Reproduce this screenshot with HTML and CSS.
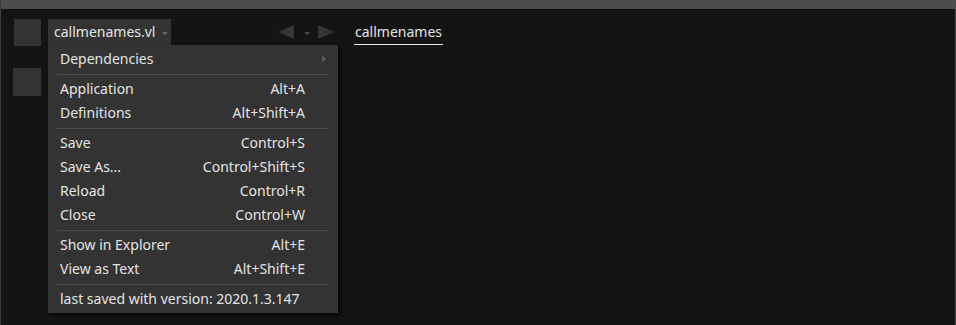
FILE: index.html
```html
<!DOCTYPE html>
<html>
<head>
<meta charset="utf-8">
<link rel="stylesheet" href="styles.css">
</head>
<body>
<div class="window">
  <div class="titlebar"></div>
  <div class="content">
    <div class="side">
      <div class="sq sq1"></div>
      <div class="sq sq2"></div>
    </div>
    <div class="main">
      <div class="tabrow">
        <div class="doc-tab">
          <span class="doc-name">callmenames.vl</span>
          <span class="tri-down"></span>
          <div class="menu">
            <div class="item"><span>Dependencies</span><span class="sub-arrow"></span></div>
            <div class="sep"></div>
            <div class="item"><span>Application</span><span class="key">Alt+A</span></div>
            <div class="item"><span>Definitions</span><span class="key">Alt+Shift+A</span></div>
            <div class="sep"></div>
            <div class="item"><span>Save</span><span class="key">Control+S</span></div>
            <div class="item"><span>Save As...</span><span class="key">Control+Shift+S</span></div>
            <div class="item"><span>Reload</span><span class="key">Control+R</span></div>
            <div class="item"><span>Close</span><span class="key">Control+W</span></div>
            <div class="sep"></div>
            <div class="item"><span>Show in Explorer</span><span class="key">Alt+E</span></div>
            <div class="item"><span>View as Text</span><span class="key">Alt+Shift+E</span></div>
            <div class="sep"></div>
            <div class="item"><span>last saved with version: 2020.1.3.147</span></div>
          </div>
        </div>
        <div class="nav">
          <span class="nav-left"></span>
          <span class="nav-down"></span>
          <span class="nav-right"></span>
        </div>
        <div class="page-tab">callmenames</div>
      </div>
    </div>
  </div>
</div>
</body>
</html>
```
FILE: styles.css
```css
* { box-sizing: border-box; }
html, body { margin: 0; padding: 0; background: #141414; }
body { width: 956px; height: 325px; overflow: hidden; font-family: "Noto Sans", "Open Sans", sans-serif; font-size: 14px; color: #e4e4e4; }
.window { height: 325px; display: flex; flex-direction: column; border-left: 1px solid #3c3c3c; border-right: 1px solid #4a4a4a; }
.titlebar { height: 9px; background: #4d4d4d; flex: none; }
.content { flex: 1; display: flex; padding-top: 10px; }
.side { width: 47px; flex: none; display: flex; flex-direction: column; align-items: flex-start; padding-left: 12px; }
.sq { background: #333333; }
.sq1 { width: 27px; height: 27px; margin-left: 1px; }
.sq2 { width: 28px; height: 28px; margin-top: 22px; }
.main { flex: 1; }
.tabrow { display: flex; align-items: flex-start; height: 27px; }
.doc-tab { position: relative; width: 123px; height: 26px; background: #333333; display: flex; align-items: center; padding-left: 6px; }
.doc-name { line-height: 26px; }
.tri-down { width: 0; height: 0; border-left: 3px solid transparent; border-right: 3px solid transparent; border-top: 3px solid #6a6a6a; margin-left: 7px; margin-top: 2px; }
.menu { position: absolute; left: 0; top: 26px; width: 290px; background: #333333; padding: 2px 0 2px; box-shadow: 3px 3px 4px rgba(0,0,0,0.55); z-index: 2; }
.item { height: 24px; display: flex; align-items: center; justify-content: space-between; padding: 0 33px 0 12px; line-height: 24px; white-space: nowrap; }
.sub-arrow { width: 0; height: 0; border-top: 4px solid transparent; border-bottom: 4px solid transparent; border-left: 4px solid #5a5a5a; margin-right: -21px; }
.sep { height: 6px; display: flex; align-items: center; padding: 0 10px 0 9px; }
.sep::before { content: ""; flex: 1; height: 1px; background: #4c4c4c; }
.nav { display: flex; align-items: center; height: 26px; margin-left: 107px; }
.nav-left { width: 0; height: 0; border-top: 7px solid transparent; border-bottom: 7px solid transparent; border-right: 16px solid #363636; }
.nav-down { width: 0; height: 0; border-left: 3px solid transparent; border-right: 3px solid transparent; border-top: 3px solid #4a4a4a; margin: 2px 8px 0 10px; }
.nav-right { width: 0; height: 0; border-top: 7px solid transparent; border-bottom: 7px solid transparent; border-left: 16px solid #363636; }
.page-tab { margin-left: 20px; height: 26px; line-height: 26px; padding: 0 1px; border-bottom: 1px solid #e8e8e8; }
```
